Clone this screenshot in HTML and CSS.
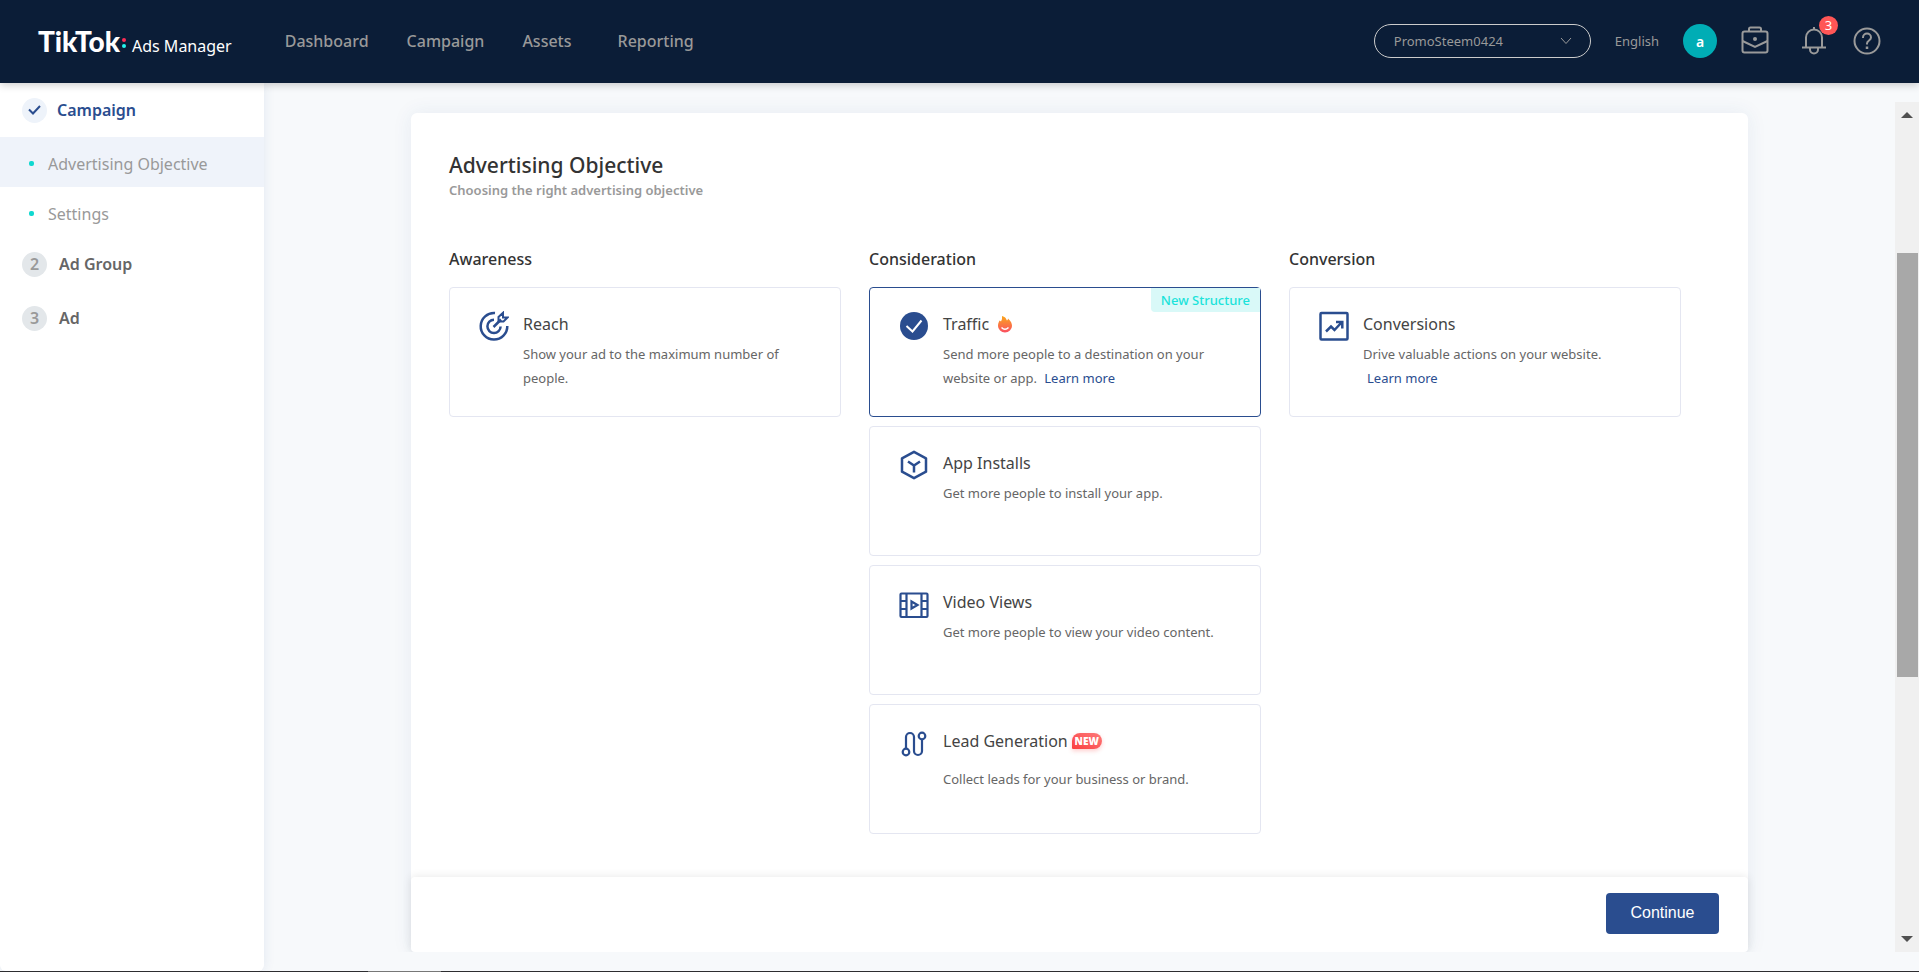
FILE: index.html
```html
<!DOCTYPE html>
<html lang="en">
<head>
    <meta charset="UTF-8">
    <meta name="viewport" content="width=device-width, initial-scale=1.0">
    <title>TikTok Ads Manager</title>
    <link rel="stylesheet" href="styles.css">
</head>
<body>
    <header class="header">
        <a class="logo" href="#">
            <span class="logo-brand">TikTok</span>
            <span class="logo-dots"><i class="dot-red"></i><i class="dot-cyan"></i></span>
            <span class="logo-sub">Ads Manager</span>
        </a>
        <nav class="nav">
            <a href="#">Dashboard</a>
            <a href="#">Campaign</a>
            <a href="#">Assets</a>
            <a href="#">Reporting</a>
        </nav>
        <div class="header-right">
            <div class="account">
                <select class="account-select" aria-label="Account">
                    <option>PromoSteem0424</option>
                </select>
                <svg class="account-arrow" width="12" height="8" viewBox="0 0 12 8" fill="none" stroke="#9a9a9a"><path d="M1 1l5 5.500l5-5.500"/></svg>
            </div>
            <a class="language" href="#">English</a>
            <button class="avatar">a</button>
            <button class="icon-button briefcase" aria-label="Business center">
                <svg width="28" height="28" viewBox="0 0 28 28" fill="none" stroke="#9a9a9a" stroke-width="2">
                    <rect x="1.500" y="4.500" width="25" height="21" rx="2"/>
                    <path d="M8 4.500V2q0-1.500 1.500-1.500h9q1.500 0 1.500 1.500v2.500M1.500 14l12.500 6l12.500-6"/>
                    <circle cx="14" cy="12" r="2" fill="#9a9a9a" stroke="none"/>
                </svg>
            </button>
            <button class="icon-button bell" aria-label="Notifications">
                <svg width="26" height="28" viewBox="0 0 26 28" fill="none" stroke="#9a9a9a" stroke-width="2">
                    <path d="M1 20.500h24M5 20.500v-10a8 8 0 0 1 16 0v10M13 0v3M9 20.500v2a4 4 0 0 0 8 0v-2"/>
                </svg>
                <span class="badge">3</span>
            </button>
            <button class="icon-button" aria-label="Help">
                <svg width="28" height="28" viewBox="0 0 28 28" fill="none" stroke="#9a9a9a" stroke-width="2">
                    <circle cx="14" cy="14" r="12.500"/>
                    <path d="M10 11V10.500a4 4 0 0 1 8 0c0 3-4 3-4 6v1"/>
                    <path d="M14 19.500v2.500" stroke-width="2.500"/>
                </svg>
            </button>
        </div>
    </header>

    <div class="layout">
        <aside class="sidebar">
            <a class="step step-done" href="#">
                <span class="step-mark">
                    <svg width="13" height="10" viewBox="0 0 13 10" fill="none" stroke="#2a4d8f" stroke-width="2"><path d="M1 4.500l4 4l7-7.500"/></svg>
                </span>
                Campaign
            </a>
            <a class="substep active" href="#">Advertising Objective</a>
            <a class="substep" href="#">Settings</a>
            <a class="step" href="#"><span class="step-mark">2</span>Ad Group</a>
            <a class="step" href="#"><span class="step-mark">3</span>Ad</a>
        </aside>

        <main class="main">
            <section class="panel">
                <div class="panel-body">
                    <h1 class="panel-title">Advertising Objective</h1>
                    <p class="panel-subtitle">Choosing the right advertising objective</p>

                    <div class="columns">
                        <div class="column">
                            <h2 class="column-title">Awareness</h2>
                            <label class="objective">
                                <input type="radio" name="objective">
                                <svg class="objective-icon" width="30" height="30" viewBox="0 0 30 30" fill="none" stroke="#2a4d8f" stroke-width="2.500">
                                    <path d="M16 2A13.300 13.300 0 1 0 28.300 15"/>
                                    <path d="M15 8.800A6.600 6.600 0 1 0 21.600 15.500"/>
                                    <path d="M14.500 16L22 8.500"/>
                                    <path d="M19.500 10.500V6L24 1.800V6.500H28.500L24.500 10.500Z" stroke-width="2"/>
                                </svg>
                                <span class="objective-text">
                                    <span class="objective-name">Reach</span>
                                    <span class="objective-desc">Show your ad to the maximum number of people.</span>
                                </span>
                            </label>
                        </div>

                        <div class="column">
                            <h2 class="column-title">Consideration</h2>
                            <label class="objective selected">
                                <input type="radio" name="objective" checked>
                                <span class="tag">New Structure</span>
                                <svg class="objective-icon" width="30" height="30" viewBox="0 0 30 30">
                                    <circle cx="15" cy="15" r="14" fill="#2a4d8f"/>
                                    <path d="M7.500 15l6 5.500l9-11" fill="none" stroke="#fff" stroke-width="2"/>
                                </svg>
                                <span class="objective-text">
                                    <span class="objective-name">Traffic
                                        <svg class="fire" width="14" height="17" viewBox="0 0 14 17">
                                            <defs>
                                                <linearGradient id="fire" x1="0" y1="0" x2="0" y2="1">
                                                    <stop offset="0" stop-color="#faa61a"/>
                                                    <stop offset="1" stop-color="#fb4f62"/>
                                                </linearGradient>
                                            </defs>
                                            <path d="M4 0C8 1 8 3 9 4.500Q10 4 10 2.500C13 5 14 7.500 14 10A7 6.500 0 0 1 0 10C0 7 1 6 1.500 4.500Q2.500 5 3 5.500Q4.500 3 4 0Z" fill="url(#fire)"/>
                                            <path d="M3.500 11.500Q7 15 10.500 11.500" fill="none" stroke="#fff" stroke-width="1.500"/>
                                        </svg>
                                    </span>
                                    <span class="objective-desc">Send more people to a destination on your website or app. <a class="learn-more" href="#">Learn more</a></span>
                                </span>
                            </label>

                            <label class="objective">
                                <input type="radio" name="objective">
                                <svg class="objective-icon" width="30" height="30" viewBox="0 0 30 30" fill="none" stroke="#2a4d8f" stroke-width="2.500">
                                    <path d="M15 1.800L27 8.300V21.700L15 28.200L3 21.700V8.300Z" stroke-linejoin="round"/>
                                    <path d="M9 11.500l6 4l6-4M15 15.500v7"/>
                                </svg>
                                <span class="objective-text">
                                    <span class="objective-name">App Installs</span>
                                    <span class="objective-desc">Get more people to install your app.</span>
                                </span>
                            </label>

                            <label class="objective">
                                <input type="radio" name="objective">
                                <svg class="objective-icon" width="30" height="30" viewBox="0 0 30 30" fill="none" stroke="#2a4d8f" stroke-width="2.200">
                                    <rect x="1.500" y="4.500" width="27" height="23.500" rx="1"/>
                                    <path d="M7.500 4v24M22.500 4v24M1.500 12h6M1.500 20h6M22.500 12h6M22.500 20h6"/>
                                    <path d="M12.500 12.500v7l6-3.500z"/>
                                </svg>
                                <span class="objective-text">
                                    <span class="objective-name">Video Views</span>
                                    <span class="objective-desc">Get more people to view your video content.</span>
                                </span>
                            </label>

                            <label class="objective objective-lead">
                                <input type="radio" name="objective">
                                <svg class="objective-icon" width="30" height="30" viewBox="0 0 30 30" fill="none" stroke="#2a4d8f" stroke-width="2.200">
                                    <circle cx="7" cy="24" r="3.300"/>
                                    <circle cx="23" cy="8" r="3.300"/>
                                    <path d="M7 20.500V9a4 4 0 0 1 8 0V23a4 4 0 0 0 8 0V11.500"/>
                                </svg>
                                <span class="objective-text">
                                    <span class="objective-name">Lead Generation <span class="new">NEW</span></span>
                                    <span class="objective-desc">Collect leads for your business or brand.</span>
                                </span>
                            </label>
                        </div>

                        <div class="column">
                            <h2 class="column-title">Conversion</h2>
                            <label class="objective">
                                <input type="radio" name="objective">
                                <svg class="objective-icon" width="30" height="30" viewBox="0 0 30 30" fill="none" stroke="#2a4d8f" stroke-width="2.500">
                                    <rect x="1.500" y="2" width="27" height="26.500" rx="1"/>
                                    <path d="M7 20.500l5-5l3.500 3.500l7-7.500M17 11h6.300v6.500"/>
                                </svg>
                                <span class="objective-text">
                                    <span class="objective-name">Conversions</span>
                                    <span class="objective-desc">Drive valuable actions on your website.<br><a class="learn-more" href="#">Learn more</a></span>
                                </span>
                            </label>
                        </div>
                    </div>
                </div>

                <div class="panel-footer">
                    <button class="continue">Continue</button>
                </div>
            </section>
        </main>

        <div class="scrollbar" aria-hidden="true">
            <span class="scroll-up"></span>
            <span class="scroll-track"><span class="scroll-thumb"></span></span>
            <span class="scroll-down"></span>
        </div>
    </div>
    <div class="bottom-line"></div>
</body>
</html>
```
FILE: styles.css
```css
* {
    box-sizing: border-box;
}
body {
    margin: 0;
    height: 100vh;
    display: flex;
    flex-direction: column;
    overflow: hidden;
    font-family: "Noto Sans", "Open Sans", sans-serif;
    font-size: 16px;
    color: #333;
    background: #f7f9fb;
}
a {
    color: inherit;
    text-decoration: none;
}
button {
    padding: 0;
    border: none;
    font-family: inherit;
    cursor: pointer;
}

/* header */
.header {
    position: relative;
    z-index: 2;
    flex: none;
    display: flex;
    align-items: center;
    height: 83px;
    padding: 0 38px 1px;
    background: #0b1d37;
    box-shadow: 0 2px 8px rgba(0, 0, 0, 0.2);
}
.logo {
    display: flex;
    align-items: baseline;
    color: #fff;
}
.logo-brand {
    font-family: Lato, sans-serif;
    font-size: 28px;
    font-weight: 900;
    line-height: 34px;
}
.logo-dots {
    display: flex;
    flex-direction: column;
    align-self: center;
    gap: 2px;
    margin: 4px 6px 0 2px;
}
.logo-dots i {
    width: 4px;
    height: 4px;
    border-radius: 50%;
}
.dot-red {
    background: #fe2c55;
}
.dot-cyan {
    background: #25f4ee;
}
.logo-sub {
    font-size: 16px;
}
.nav {
    display: flex;
    gap: 38px;
    margin-left: 53px;
    font-weight: 500;
    color: #999;
}
.nav a:last-child {
    margin-left: 8px;
}
.header-right {
    display: flex;
    align-items: center;
    margin-left: auto;
    color: #999;
}
.account {
    position: relative;
    margin-right: 24px;
}
.account-select {
    display: block;
    width: 217px;
    height: 34px;
    padding: 0 19px;
    border: 1px solid #ccc;
    border-radius: 17px;
    appearance: none;
    background: transparent;
    font-family: inherit;
    font-size: 13px;
    color: #999;
}
.account-arrow {
    position: absolute;
    top: 13px;
    right: 19px;
    pointer-events: none;
}
.language {
    font-size: 13px;
}
.avatar {
    width: 34px;
    height: 34px;
    margin: 0 24px;
    border-radius: 50%;
    background: #00adb5;
    font-size: 14px;
    font-weight: 600;
    color: #fff;
}
.icon-button {
    position: relative;
    display: flex;
    background: transparent;
}
.briefcase {
    margin-right: 32px;
}
.briefcase svg {
    overflow: visible;
}
.bell {
    margin-right: 26px;
}
.badge {
    position: absolute;
    top: -11px;
    right: -11px;
    width: 19px;
    height: 19px;
    border-radius: 50%;
    background: #ff5656;
    font-size: 13px;
    line-height: 19px;
    color: #fff;
}

/* page */
.layout {
    flex: 1;
    display: flex;
    min-height: 0;
}
.sidebar {
    flex: none;
    width: 264px;
    border-radius: 0 0 6px 6px;
    background: #fff;
    box-shadow: 0 0 12px rgba(42, 77, 143, 0.1);
}
.step {
    display: flex;
    align-items: center;
    gap: 12px;
    height: 54px;
    padding-left: 22px;
    font-weight: 600;
    color: #666;
}
.step-mark {
    display: flex;
    align-items: center;
    justify-content: center;
    width: 25px;
    height: 25px;
    border-radius: 50%;
    background: #e3e7ea;
    color: #999;
}
.step-done {
    gap: 10px;
    color: #2a4d8f;
}
.step-done .step-mark {
    background: #eef3fa;
}
.substep {
    display: flex;
    align-items: center;
    gap: 14px;
    height: 50px;
    padding: 3px 0 0 29px;
    color: #999;
}
.substep::before {
    content: "";
    width: 5px;
    height: 5px;
    border-radius: 2px;
    background: #10d8d0;
}
.substep.active {
    background: #eff3fa;
}
.main {
    flex: 1;
    display: flex;
    margin-bottom: 19px;
    padding: 30px 147px 0;
    overflow: hidden;
}
.panel {
    flex: 1;
    display: flex;
    flex-direction: column;
    border-radius: 6px;
    background: #fff;
    box-shadow: 0 0 20px rgba(42, 77, 143, 0.08);
}
.panel-body {
    flex: 1;
    padding: 37px 67px 0 38px;
}
.panel-title {
    margin: 0;
    font-size: 21px;
    font-weight: 500;
    line-height: 30px;
}
.panel-subtitle {
    margin: 0 0 47px;
    font-size: 13px;
    font-weight: 600;
    line-height: 20px;
    color: #999;
}
.columns {
    display: grid;
    grid-template-columns: repeat(3, 1fr);
    gap: 28px;
}
.column {
    display: flex;
    flex-direction: column;
    gap: 9px;
}
.column-title {
    margin: 0 0 7px;
    font-size: 16px;
    font-weight: 500;
    line-height: 24px;
}
.objective {
    position: relative;
    display: flex;
    align-items: flex-start;
    gap: 14px;
    min-height: 130px;
    padding: 23px 24px 23px 29px;
    border: 1px solid #e4e6f1;
    border-radius: 4px;
    cursor: pointer;
}
.objective input {
    position: absolute;
    opacity: 0;
}
.objective.selected {
    border-color: #2a4d8f;
}
.objective-icon {
    flex: none;
}
.objective-text {
    padding-top: 1px;
}
.objective-name {
    display: flex;
    align-items: center;
    margin-bottom: 6px;
    line-height: 24px;
    color: #444;
}
.objective-lead .objective-name {
    margin-bottom: 14px;
}
.objective-desc {
    display: block;
    font-size: 13px;
    line-height: 24px;
    color: #666;
}
.learn-more {
    margin-left: 4px;
    color: #2a4d8f;
}
.fire {
    margin-left: 9px;
}
.tag {
    position: absolute;
    top: 0;
    right: 0;
    padding: 0 10px;
    border-radius: 0 0 0 4px;
    background: #d9f9f8;
    font-size: 13px;
    font-weight: 500;
    line-height: 24px;
    color: #1be3da;
}
.new {
    width: 30px;
    height: 16px;
    margin-left: 4px;
    border-radius: 8px 8px 8px 1px;
    background: linear-gradient(30deg, #fb3f40, #fd7a7a);
    box-shadow: 0 2px 4px rgba(251, 63, 64, 0.25);
    font-family: "Open Sans", sans-serif;
    font-size: 10px;
    font-weight: 800;
    line-height: 16px;
    text-align: center;
    color: #fff;
}
.panel-footer {
    display: flex;
    justify-content: flex-end;
    padding: 16px 29px 18px;
    border-radius: 4px;
    background: #fff;
    box-shadow: 0 0 10px rgba(0, 0, 0, 0.1);
}
.continue {
    width: 113px;
    height: 41px;
    padding-bottom: 2px;
    border-radius: 4px;
    background: #2a4d8f;
    font-family: "Liberation Sans", Arial, sans-serif;
    font-size: 16px;
    color: #fff;
}

/* scrollbar */
.scrollbar {
    flex: none;
    display: flex;
    flex-direction: column;
    align-items: center;
    width: 24px;
    margin: 19px 0;
    padding: 10px 0;
    background: #f0f0f0;
}
.scroll-up,
.scroll-down {
    border: 6px solid transparent;
}
.scroll-up {
    border-top: none;
    border-bottom-color: #505050;
}
.scroll-down {
    border-bottom: none;
    border-top-color: #505050;
}
.scroll-track {
    flex: 1;
    width: 21px;
    padding: 135px 0 10px;
}
.scroll-thumb {
    display: block;
    height: 63%;
    background: #a8a8a8;
}
.bottom-line {
    flex: none;
    height: 1px;
    background: linear-gradient(#777, #777) 368px 0 / 73px 1px no-repeat #2d2d30;
}
```
